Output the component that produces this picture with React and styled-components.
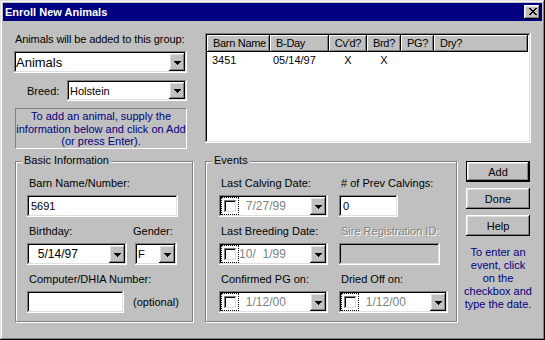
import React from 'react';
import styled, { createGlobalStyle, css } from 'styled-components';

const GlobalStyle = createGlobalStyle`
  html, body {
    margin: 0;
    padding: 0;
    background: #c0c0c0;
  }
  body {
    font-family: 'Liberation Sans', Arial, sans-serif;
    font-size: 11px;
    color: #000;
  }
  * {
    box-sizing: border-box;
  }
`

const raised = css`
  background: #c0c0c0;
  box-shadow: inset -1px -1px #000, inset 1px 1px #fff, inset -2px -2px #808080, inset 2px 2px #dfdfdf;
`

const sunken = css`
  box-shadow: inset -1px -1px #fff, inset 1px 1px #808080, inset -2px -2px #dfdfdf, inset 2px 2px #000;
`

const Window = styled.div`
  width: 545px;
  height: 340px;
  padding: 3px;
  background: #c0c0c0;
  box-shadow: inset -1px -1px #000, inset 1px 1px #dfdfdf, inset -2px -2px #808080, inset 2px 2px #fff;
  display: flex;
  flex-direction: column;
`

const TitleBar = styled.div`
  height: 18px;
  padding: 0 2px;
  background: #000080;
  color: #fff;
  display: flex;
  align-items: center;
  justify-content: space-between;
`

const TitleText = styled.span`
  font-weight: bold;
  line-height: 13px;
`

const CloseButton = styled.button`
  ${raised};
  width: 16px;
  height: 14px;
  padding: 0 0 1px 1px;
  border: 0;
  display: flex;
  align-items: center;
  justify-content: center;
`

const Body = styled.div`
  flex: 1;
  padding: 12px 0 0 11px;
`

const TopRow = styled.div`
  display: flex;
  height: 115px;
`

const LeftPanel = styled.div`
  width: 173px;
  display: flex;
  flex-direction: column;
`

const Caption = styled.div`
  line-height: 13px;
  padding-left: 1px;
  white-space: nowrap;
  letter-spacing: -0.1px;
`

const BreedRow = styled.div`
  display: flex;
  align-items: center;
  margin-top: 7px;
  padding-left: 13px;
`

const InfoBox = styled.div`
  width: 172px;
  height: 41px;
  margin: 7px 0 0 1px;
  padding-top: 1px;
  border: 1px solid;
  border-color: #808080 #fff #fff #808080;
  color: #000080;
  text-align: center;
  line-height: 12.5px;
  white-space: nowrap;
`

const ListView = styled.div`
  ${sunken};
  width: 326px;
  height: 110px;
  margin-left: 18px;
  padding: 2px;
  background: #fff;
`

const ListHeader = styled.div`
  display: flex;
  height: 17px;
`

const HeaderCell = styled.div`
  width: ${({ $w }) => $w}px;
  padding-left: ${({ $center }) => ($center ? 0 : 6)}px;
  text-align: ${({ $center }) => ($center ? 'center' : 'left')};
  line-height: 16px;
  letter-spacing: -0.3px;
  white-space: nowrap;
  background: #c0c0c0;
  box-shadow: inset -1px -1px #000, inset 1px 1px #fff, inset -2px -2px #808080;
`

const ListRow = styled.div`
  display: flex;
  height: 13px;
  margin-top: 2px;
  line-height: 13px;
`

const RowCell = styled.div`
  width: ${({ $w }) => $w}px;
  padding-left: ${({ $pad }) => $pad}px;
  text-align: ${({ $center }) => ($center ? 'center' : 'left')};
`

const BottomRow = styled.div`
  display: flex;
  margin-top: 13px;
`

const GroupBox = styled.div`
  position: relative;
  width: ${({ $w }) => $w}px;
  height: 161px;
  margin-left: ${({ $ml }) => $ml}px;
  padding: 15px 0 0 ${({ $pad }) => $pad}px;
  border: 1px solid #808080;
  box-shadow: inset 1px 1px #fff, 1px 1px #fff;
  display: flex;
  flex-direction: column;
  gap: 8px;
`

const GroupTitle = styled.span`
  position: absolute;
  top: -8px;
  left: 6px;
  padding: 0 2px;
  line-height: 13px;
  background: #c0c0c0;
`

const EventsGrid = styled.div`
  display: grid;
  grid-template-columns: 109px 109px;
  column-gap: 11px;
  row-gap: 8px;
`

const Field = styled.div`
  display: flex;
  flex-direction: column;
  margin-left: ${({ $ml }) => $ml || 0}px;
`

const FieldLabel = styled.label`
  display: block;
  line-height: 13px;
  height: 13px;
  margin-bottom: 5px;
  padding-left: 2px;
  margin-left: ${({ $ml }) => $ml || 0}px;
  white-space: nowrap;
  color: ${({ $disabled }) => ($disabled ? '#808080' : '#000')};
  text-shadow: ${({ $disabled }) => ($disabled ? '1px 1px #fff' : 'none')};
`

const InlineRow = styled.div`
  display: flex;
  align-items: ${({ $top }) => ($top ? 'flex-start' : 'center')};
`

const TextBox = styled.input`
  ${sunken};
  width: ${({ $w }) => $w}px;
  height: 22px;
  margin: 0;
  padding: 0 2px 0 4px;
  border: 0;
  outline: none;
  font-family: 'Liberation Sans', Arial, sans-serif;
  font-size: 11px;
  color: #000;
  background: ${({ disabled }) => (disabled ? '#c0c0c0' : '#fff')};
`

const ComboBox = styled.div`
  ${sunken};
  width: ${({ $w }) => $w}px;
  height: ${({ $h }) => $h || 22}px;
  margin-top: ${({ $mt }) => $mt || 0}px;
  margin-left: ${({ $auto }) => ($auto ? 'auto' : '0')};
  padding: 2px;
  background: #fff;
  display: flex;
  flex-shrink: 0;
`

const ComboText = styled.div`
  flex: 1;
  display: flex;
  align-items: center;
  padding-left: ${({ $pl }) => $pl || 0}px;
  font-size: ${({ $fs }) => $fs || 11}px;
  white-space: nowrap;
`

const DropButton = styled.div`
  ${raised};
  width: 16px;
  display: flex;
  align-items: center;
  justify-content: center;
  padding-top: 1px;
`

const FocusRect = styled.div`
  width: 18px;
  border: 1px dotted #000;
  display: flex;
  align-items: center;
  justify-content: center;
`

const CheckBox = styled.div`
  ${sunken};
  width: 13px;
  height: 13px;
  background: #fff;
`

const DateText = styled.div`
  display: flex;
  align-items: center;
  padding-left: ${({ $pl }) => $pl || 0}px;
  font-size: 12px;
  color: ${({ $dim }) => ($dim ? '#808080' : '#000')};
`

const Seg = styled.span`
  display: inline-block;
  width: 13.4px;
  text-align: right;
  white-space: pre;
`

const Optional = styled.span`
  margin-left: 9px;
`

const ButtonColumn = styled.div`
  width: 82px;
  display: flex;
  flex-direction: column;
  align-items: center;
`

const PushButton = styled.button`
  ${raised};
  width: 64px;
  height: 21px;
  margin-top: ${({ $first }) => ($first ? 0 : 6)}px;
  padding: 0;
  border: 0;
  font-family: 'Liberation Sans', Arial, sans-serif;
  font-size: 11px;
  color: #000;
  ${({ $default }) =>
    $default &&
    css`
      box-shadow: inset 0 0 0 1px #000, inset -2px -2px #000, inset 2px 2px #fff, inset -3px -3px #808080, inset 3px 3px #dfdfdf;
    `}
`

const HelpText = styled.div`
  margin-top: 10px;
  color: #000080;
  text-align: center;
  line-height: 13px;
  white-space: nowrap;
`

const PixelIcon = ({ rows, color = '#000' }) => {
  const w = rows[0].length
  const h = rows.length
  return (
    <svg width={w} height={h} viewBox={`0 0 ${w} ${h}`} shapeRendering="crispEdges">
      {rows.map((row, y) =>
        row.split('').map((c, x) =>
          c === '#' ? <rect key={`${x}-${y}`} x={x} y={y} width="1" height="1" fill={color} /> : null
        )
      )}
    </svg>
  )
}

const closeGlyph = ['##....##', '.##..##.', '..####..', '...##...', '..####..', '.##..##.', '##....##']
const arrowGlyph = ['#######', '.#####.', '..###..', '...#...']

const Arrow = () => (
  <DropButton>
    <PixelIcon rows={arrowGlyph} />
  </DropButton>
)

const DateValue = ({ m, d, y, dim, pl }) => (
  <DateText $dim={dim} $pl={pl}>
    <Seg>{m}</Seg>/<Seg>{d}</Seg>/{y}
  </DateText>
)

const DatePicker = ({ m, d, y, w = 109 }) => (
  <ComboBox $w={w}>
    <FocusRect>
      <CheckBox />
    </FocusRect>
    <ComboText>
      <DateValue m={m} d={d} y={y} dim />
    </ComboText>
    <Arrow />
  </ComboBox>
)

const columns = [
  { title: 'Barn Name', w: 63 },
  { title: 'B-Day', w: 59 },
  { title: "Cv'd?", w: 38, center: true },
  { title: 'Brd?', w: 34, center: true },
  { title: 'PG?', w: 33, center: true },
  { title: 'Dry?', w: 94 },
]

const rows = [['3451', '05/14/97', 'X', 'X', '', '']]

export default function App() {
  return (
    <>
      <GlobalStyle />
      <Window>
        <TitleBar>
          <TitleText>Enroll New Animals</TitleText>
          <CloseButton>
            <PixelIcon rows={closeGlyph} />
          </CloseButton>
        </TitleBar>
        <Body>
          <TopRow>
            <LeftPanel>
              <Caption>Animals will be added to this group:</Caption>
              <ComboBox $w={173} $mt={5}>
                <ComboText $fs={13}>Animals</ComboText>
                <Arrow />
              </ComboBox>
              <BreedRow>
                <span>Breed:</span>
                <ComboBox $w={120} $h={21} $auto>
                  <ComboText $pl={1}>Holstein</ComboText>
                  <Arrow />
                </ComboBox>
              </BreedRow>
              <InfoBox>
                To add an animal, supply the
                <br />
                information below and click on Add
                <br />
                (or press Enter).
              </InfoBox>
            </LeftPanel>
            <ListView>
              <ListHeader>
                {columns.map((c) => (
                  <HeaderCell key={c.title} $w={c.w} $center={c.center}>
                    {c.title}
                  </HeaderCell>
                ))}
              </ListHeader>
              {rows.map((r, i) => (
                <ListRow key={i}>
                  {r.map((v, j) => (
                    <RowCell key={j} $w={columns[j].w} $center={columns[j].center} $pad={j === 1 ? 3 : columns[j].center ? 0 : 5}>
                      {v}
                    </RowCell>
                  ))}
                </ListRow>
              ))}
            </ListView>
          </TopRow>

          <BottomRow>
            <GroupBox $w={178} $ml={1} $pad={11}>
              <GroupTitle>Basic Information</GroupTitle>
              <Field>
                <FieldLabel>Barn Name/Number:</FieldLabel>
                <TextBox $w={151} defaultValue="5691" readOnly />
              </Field>
              <InlineRow $top>
                <Field>
                  <FieldLabel>Birthday:</FieldLabel>
                  <ComboBox $w={100}>
                    <ComboText>
                      <DateValue m="5" d="14" y="97" pl={2} />
                    </ComboText>
                    <Arrow />
                  </ComboBox>
                </Field>
                <Field $ml={8}>
                  <FieldLabel $ml={-4}>Gender:</FieldLabel>
                  <ComboBox $w={42}>
                    <ComboText $pl={1}>F</ComboText>
                    <Arrow />
                  </ComboBox>
                </Field>
              </InlineRow>
              <Field>
                <FieldLabel>Computer/DHIA Number:</FieldLabel>
                <InlineRow>
                  <TextBox $w={97} readOnly />
                  <Optional>(optional)</Optional>
                </InlineRow>
              </Field>
            </GroupBox>

            <GroupBox $w={252} $ml={12} $pad={13}>
              <GroupTitle>Events</GroupTitle>
              <EventsGrid>
                <Field>
                  <FieldLabel>Last Calving Date:</FieldLabel>
                  <DatePicker m="7" d="27" y="99" />
                </Field>
                <Field>
                  <FieldLabel># of Prev Calvings:</FieldLabel>
                  <TextBox $w={59} defaultValue="0" readOnly />
                </Field>
                <Field>
                  <FieldLabel>Last Breeding Date:</FieldLabel>
                  <DatePicker m="10" d=" 1" y="99" />
                </Field>
                <Field>
                  <FieldLabel $disabled>Sire Registration ID:</FieldLabel>
                  <TextBox $w={101} disabled />
                </Field>
                <Field>
                  <FieldLabel>Confirmed PG on:</FieldLabel>
                  <DatePicker m="1" d="12" y="00" />
                </Field>
                <Field>
                  <FieldLabel>Dried Off on:</FieldLabel>
                  <DatePicker m="1" d="12" y="00" />
                </Field>
              </EventsGrid>
            </GroupBox>

            <ButtonColumn>
              <PushButton $first $default>Add</PushButton>
              <PushButton>Done</PushButton>
              <PushButton>Help</PushButton>
              <HelpText>
                To enter an
                <br />
                event, click
                <br />
                on the
                <br />
                checkbox and
                <br />
                type the date.
              </HelpText>
            </ButtonColumn>
          </BottomRow>
        </Body>
      </Window>
    </>
  )
}
